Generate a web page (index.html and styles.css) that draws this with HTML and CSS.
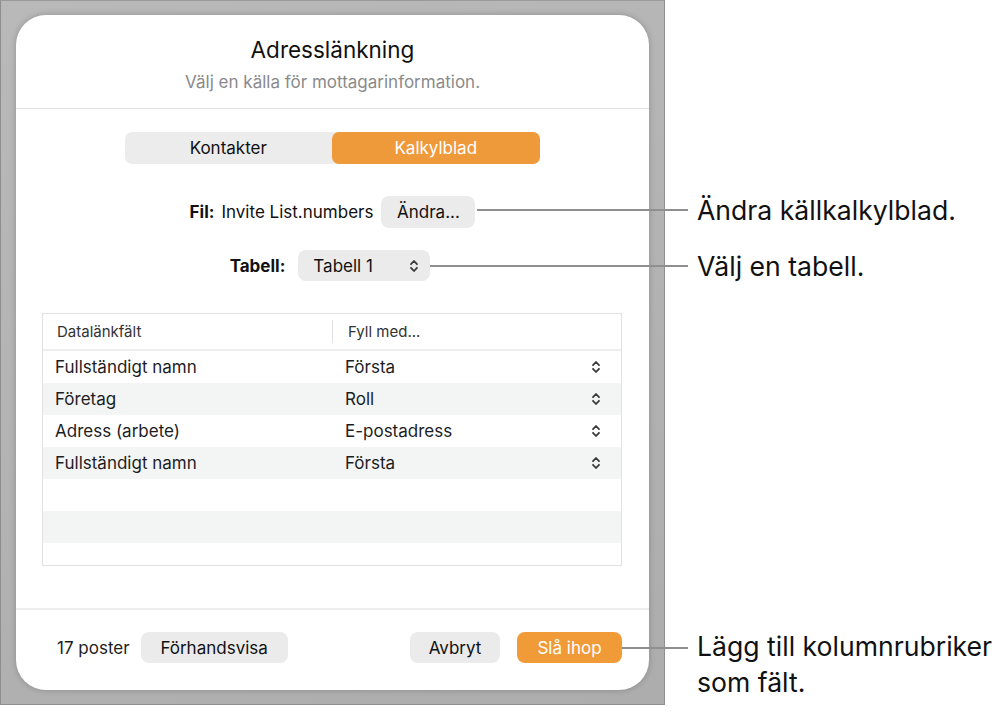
FILE: index.html
```html
<!DOCTYPE html>
<html lang="sv">
<head>
<meta charset="utf-8">
<title>Adresslänkning</title>
<link rel="stylesheet" href="styles.css">
</head>
<body>
<div class="stage">
  <div class="frame">
    <div class="dialog">
      <header class="dlg-head">
        <h1 class="title">Adresslänkning</h1>
        <p class="subtitle">Välj en källa för mottagarinformation.</p>
      </header>
      <section class="dlg-body">
        <div class="segmented">
          <div class="seg">Kontakter</div>
          <div class="seg seg-on">Kalkylblad</div>
        </div>
        <div class="field-row file-row">
          <span class="label">Fil:</span>
          <span class="value">Invite List.numbers</span>
          <span class="btn btn-change">Ändra...</span>
        </div>
        <div class="field-row table-row">
          <span class="label">Tabell:</span>
          <span class="popup">
            <span>Tabell 1</span>
            <svg class="chev" viewBox="0 0 10 16" width="10" height="16"><path d="M2 6.2 L5 3 L8 6.2 M2 9.8 L5 13 L8 9.8"/></svg>
          </span>
        </div>
        <div class="grid">
          <div class="grid-head">
            <div class="gh-cell">Datalänkfält</div>
            <div class="gh-cell gh-second">Fyll med...</div>
          </div>
          <div class="grow">
            <span class="c1">Fullständigt namn</span><span class="c2">Första</span>
            <svg class="chev" viewBox="0 0 10 16" width="10" height="16"><path d="M2 6.2 L5 3 L8 6.2 M2 9.8 L5 13 L8 9.8"/></svg>
          </div>
          <div class="grow alt">
            <span class="c1">Företag</span><span class="c2">Roll</span>
            <svg class="chev" viewBox="0 0 10 16" width="10" height="16"><path d="M2 6.2 L5 3 L8 6.2 M2 9.8 L5 13 L8 9.8"/></svg>
          </div>
          <div class="grow">
            <span class="c1">Adress (arbete)</span><span class="c2">E-postadress</span>
            <svg class="chev" viewBox="0 0 10 16" width="10" height="16"><path d="M2 6.2 L5 3 L8 6.2 M2 9.8 L5 13 L8 9.8"/></svg>
          </div>
          <div class="grow alt">
            <span class="c1">Fullständigt namn</span><span class="c2">Första</span>
            <svg class="chev" viewBox="0 0 10 16" width="10" height="16"><path d="M2 6.2 L5 3 L8 6.2 M2 9.8 L5 13 L8 9.8"/></svg>
          </div>
          <div class="grow empty"></div>
          <div class="grow alt empty"></div>
          <div class="grow empty last"></div>
        </div>
      </section>
      <footer class="dlg-foot">
        <span class="count">17 poster</span>
        <span class="btn btn-preview">Förhandsvisa</span>
        <span class="spacer"></span>
        <span class="btn btn-cancel">Avbryt</span>
        <span class="btn btn-merge">Slå ihop</span>
      </footer>
    </div>
  </div>

  <div class="callout co-file">
    <span class="co-line"></span>
    <span class="co-text">Ändra källkalkylblad.</span>
  </div>
  <div class="callout co-table">
    <span class="co-line"></span>
    <span class="co-text">Välj en tabell.</span>
  </div>
  <div class="callout co-merge">
    <span class="co-line"></span>
    <span class="co-text">Lägg till kolumnrubriker<br>som fält.</span>
  </div>
</div>
</body>
</html>
```

FILE: styles.css
```css
* { box-sizing: border-box; }
html, body { margin: 0; padding: 0; background: #fff; }
body {
  font-family: Inter, Roboto, "Liberation Sans", Arial, sans-serif;
  color: #1d1d1f;
  width: 1008px;
  height: 726px;
  overflow: hidden;
}
.stage {
  position: relative;
  width: 1008px;
  height: 726px;
}
.frame {
  width: 665px;
  height: 705px;
  background: linear-gradient(160deg, #b9b9b9 0%, #b3b3b3 50%, #adadad 100%);
  border: 1px solid #8e8e8e;
  border-top-color: #9a9a9a;
  padding: 14px 0 0 15px;
}
.dialog {
  width: 633px;
  height: 675px;
  background: #fff;
  border-radius: 30px;
  box-shadow: 0 0 6px rgba(0,0,0,0.22);
  display: flex;
  flex-direction: column;
}
.dlg-head {
  text-align: center;
  padding-top: 21px;
  padding-bottom: 16px;
  border-bottom: 1px solid #e3e3e3;
}
.title {
  margin: 0;
  font-size: 22.5px;
  line-height: 28px;
  font-weight: 400;
  color: #111;
}
.subtitle {
  margin: 8px 0 0;
  font-size: 17px;
  line-height: 20px;
  color: #8a8a8a;
}
.dlg-body {
  padding: 23px 27px 0 26px;
  display: flex;
  flex-direction: column;
  align-items: center;
}
.segmented {
  display: flex;
  width: 415px;
  height: 32px;
  background: #ececec;
  border-radius: 7px;
}
.seg {
  flex: 1;
  display: flex;
  align-items: center;
  justify-content: center;
  font-size: 17px;
  color: #111;
  border-radius: 7px;
}
.seg-on {
  background: #ef9a3a;
  color: #fff;
}
.field-row {
  display: flex;
  align-items: center;
  font-size: 17px;
  color: #111;
}
.file-row { margin-top: 32px; height: 32px; margin-left: 1px; }
.table-row { margin-top: 22px; height: 31px; margin-left: -4px; }
.label { font-weight: 700; }
.file-row .value { margin-left: 7px; }
.btn {
  display: inline-flex;
  align-items: center;
  justify-content: center;
  height: 32px;
  background: #ebebeb;
  border-radius: 8px;
  font-size: 17px;
  color: #111;
}
.btn-change { width: 94px; margin-left: 8px; }
.popup {
  display: inline-flex;
  align-items: center;
  justify-content: space-between;
  width: 132px;
  height: 31px;
  margin-left: 13px;
  padding: 0 11px 0 15px;
  background: #ebebeb;
  border-radius: 8px;
}
.chev path {
  fill: none;
  stroke: #3a3a3a;
  stroke-width: 1.8;
  stroke-linecap: round;
  stroke-linejoin: round;
}
.grid {
  align-self: stretch;
  margin-top: 32px;
  border: 1px solid #e2e2e2;
  height: 253px;
}
.grid-head {
  display: flex;
  height: 37px;
  border-bottom: 2px solid #eeeeee;
  align-items: center;
  font-size: 15px;
  color: #333;
}
.gh-cell { width: 290px; padding-left: 14px; }
.gh-second {
  border-left: 1px solid #e2e2e2;
  padding-left: 15px;
  height: 23px;
  display: flex;
  align-items: center;
}
.grow {
  display: flex;
  align-items: center;
  height: 32px;
  font-size: 17px;
  color: #1d1d1f;
}
.grow.alt { background: #f3f4f4; }
.grow.last { height: 22px; }
.c1 { width: 290px; padding-left: 12px; }
.c2 { flex: 1; padding-left: 12px; }
.grow .chev { margin-right: 20px; }
.dlg-foot {
  margin-top: auto;
  border-top: 2px solid #eeeeee;
  height: 82px;
  display: flex;
  align-items: flex-start;
  padding: 22px 27px 0 41px;
}
.count {
  font-size: 17px;
  line-height: 32px;
  color: #1d1d1f;
}
.btn-preview { width: 147px; margin-left: 11px; height: 31px; font-size: 17px; }
.spacer { flex: 1; }
.btn-cancel { width: 90px; height: 31px; font-size: 17px; }
.btn-merge {
  width: 105px;
  height: 31px;
  margin-left: 17px;
  background: #f19a38;
  color: #fff;
  font-size: 17px;
}
.callout {
  position: absolute;
  display: flex;
  align-items: center;
}
.co-line {
  display: block;
  height: 2px;
  background: #8f8f8f;
  margin-right: 9px;
}
.co-text {
  font-size: 26.6px;
  line-height: 36px;
  color: #111;
  white-space: nowrap;
}
.co-file { left: 477px; top: 192px; }
.co-file .co-line { width: 211px; }
.co-table { left: 430px; top: 248px; }
.co-table .co-line { width: 258px; }
.co-merge { left: 622px; top: 628px; align-items: flex-start; }
.co-merge .co-line { width: 66px; margin-top: 19px; }
```
